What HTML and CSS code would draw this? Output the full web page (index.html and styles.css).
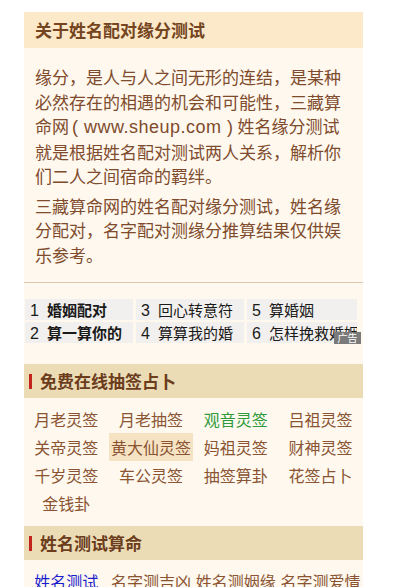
FILE: index.html
```html
<!DOCTYPE html>
<html lang="zh-CN">
<head>
<meta charset="utf-8">
<title>姓名配对缘分测试</title>
<link rel="stylesheet" href="styles.css">
</head>
<body>
<div class="wrap">
  <div class="about">
    <div class="about-head">关于姓名配对缘分测试</div>
    <div class="about-body">
      <p>缘分，是人与人之间无形的连结，是某种必然存在的相遇的机会和可能性，三藏算命网<span class="lat">( www.sheup.com )</span>姓名缘分测试就是根据姓名配对测试两人关系，解析你们二人之间宿命的羁绊。</p>
      <p>三藏算命网的姓名配对缘分测试，姓名缘分配对，名字配对测缘分推算结果仅供娱乐参考。</p>
    </div>
  </div>
  <div class="ad">
    <div class="ad-grid">
      <div class="ad-cell bold"><span class="num">1</span>婚姻配对</div>
      <div class="ad-cell"><span class="num">3</span>回心转意符</div>
      <div class="ad-cell"><span class="num">5</span>算婚姻</div>
      <div class="ad-cell bold"><span class="num">2</span>算一算你的</div>
      <div class="ad-cell"><span class="num">4</span>算算我的婚</div>
      <div class="ad-cell"><span class="num">6</span>怎样挽救婚姻</div>
    </div>
    <span class="ad-tag">广告</span>
  </div>
  <div class="sec">
    <div class="sec-head"><i class="bar"></i>免费在线抽签占卜</div>
    <div class="links">
      <a>月老灵签</a><a>月老抽签</a><a class="green">观音灵签</a><a>吕祖灵签</a>
      <a>关帝灵签</a><a class="hl">黄大仙灵签</a><a>妈祖灵签</a><a>财神灵签</a>
      <a>千岁灵签</a><a>车公灵签</a><a>抽签算卦</a><a>花签占卜</a>
      <a>金钱卦</a>
    </div>
  </div>
  <div class="sec">
    <div class="sec-head"><i class="bar"></i>姓名测试算命</div>
    <div class="links">
      <a class="blue">姓名测试</a><a>名字测吉凶</a><a>姓名测姻缘</a><a>名字测爱情</a>
    </div>
  </div>
</div>
</body>
</html>
```
FILE: styles.css
```css
html, body {
  margin: 0;
  padding: 0;
  background: #ffffff;
}
body {
  font-family: "Noto Sans CJK SC", "Liberation Sans", sans-serif;
  overflow: hidden;
  height: 587px;
}
.wrap {
  width: 339px;
  margin: 12px 0 0 24px;
  background: #fef8ee;
}
.about-head {
  height: 36px;
  line-height: 36px;
  background: #fce9c9;
  color: #744520;
  font-size: 17px;
  font-weight: bold;
  padding-left: 11px;
}
.about-body {
  padding: 17px 11px 15px 11px;
  border-bottom: 1px solid #dcc7ae;
}
.about-body p {
  margin: 0 0 5px 0;
  font-size: 17px;
  line-height: 24.5px;
  color: #7e4b2d;
}
.about-body p:last-child {
  margin-bottom: 0;
}
.lat {
  font-family: "Liberation Sans", sans-serif;
  font-size: 18px;
  letter-spacing: 0.5px;
  margin: 0 4px 0 3px;
}
.ad {
  position: relative;
  padding: 16px 0 21px 1px;
}
.ad-grid {
  display: grid;
  grid-template-columns: 108px 108px 110px;
  grid-auto-rows: 21px;
  column-gap: 3px;
  row-gap: 2px;
}
.ad-cell {
  background: #f2f0ee;
  font-size: 15px;
  line-height: 21px;
  color: #1a1a1a;
  padding-left: 5px;
  white-space: nowrap;
  overflow: hidden;
  font-family: "Noto Sans CJK SC", sans-serif;
}
.ad-cell.bold {
  font-weight: bold;
}
.num {
  font-family: "Liberation Sans", sans-serif;
  font-weight: normal;
  font-size: 16px;
  margin-right: 8px;
}
.ad-tag {
  position: absolute;
  right: 2px;
  top: 49px;
  width: 27px;
  height: 12px;
  background: #7a7a7a;
  color: #ffffff;
  font-size: 10px;
  line-height: 12px;
  text-align: center;
}
.sec-head {
  height: 34px;
  line-height: 34px;
  background: #ecdcb5;
  color: #6b3d1d;
  font-size: 17px;
  font-weight: bold;
  display: flex;
  align-items: center;
  padding-left: 5px;
}
.bar {
  display: block;
  width: 3px;
  height: 15px;
  background: #c2231c;
  margin-right: 8px;
}
.links {
  display: grid;
  grid-template-columns: repeat(4, 1fr);
  grid-auto-rows: 28px;
  padding: 7px 0 9px 0;
}
.links a {
  justify-self: center;
  font-size: 16px;
  line-height: 28px;
  color: #8a5433;
  white-space: nowrap;
  padding: 0 2px;
}
.links a.green {
  color: #2f9a3b;
}
.links a.blue {
  color: #1c1ccf;
}
.links a.hl {
  background: #f6e3c4;
}
```
